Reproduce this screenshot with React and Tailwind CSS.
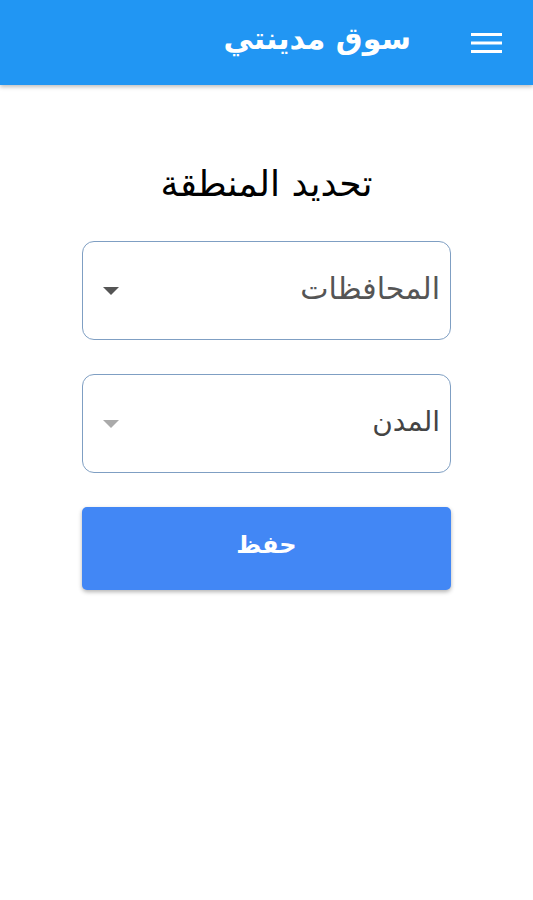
export default function App() {
  return (
    <div dir="rtl" className="min-h-[900px] bg-white" style={{ fontFamily: '"DejaVu Sans", "Noto Sans", sans-serif' }}>
      {/* App bar */}
      <header className="h-[85px] bg-[#2196f3] shadow-[0_2px_4px_rgba(0,0,0,0.25)] flex items-center pr-[31px] gap-[60px]">
        <svg width="31" height="22" viewBox="0 0 31 22" className="text-white">
          <rect x="0" y="1" width="31" height="3" fill="currentColor" />
          <rect x="0" y="9.5" width="31" height="3" fill="currentColor" />
          <rect x="0" y="18" width="31" height="3" fill="currentColor" />
        </svg>
        <h1 className="text-white text-[30px] font-bold mb-2">سوق مدينتي</h1>
      </header>

      <main className="px-[82px] pt-[72px] flex flex-col">
        <h2 className="text-center text-[36px] text-black mb-[30px]">تحديد المنطقة</h2>

        {/* Governorates */}
        <div className="h-[99px] rounded-[12px] border border-[#7f9fc3] flex items-center justify-between pr-[10px] pl-[20px] mb-[34px]">
          <span className="text-[30px] text-[#555] mb-1">المحافظات</span>
          <svg width="16" height="8" viewBox="0 0 16 8"><path d="M0 0h16L8 8z" fill="#555" /></svg>
        </div>

        {/* Cities */}
        <div className="h-[99px] rounded-[12px] border border-[#7f9fc3] flex items-center justify-between pr-[10px] pl-[20px] mb-[34px]">
          <span className="text-[28px] text-[#444] mb-1">المدن</span>
          <svg width="16" height="8" viewBox="0 0 16 8"><path d="M0 0h16L8 8z" fill="#aaa" /></svg>
        </div>

        <button className="h-[83px] rounded-[5px] bg-[#4287f5] text-white text-[24px] font-bold shadow-[0_2px_4px_rgba(0,0,0,0.3)] pb-2">
          حفظ
        </button>
      </main>
    </div>
  );
}
